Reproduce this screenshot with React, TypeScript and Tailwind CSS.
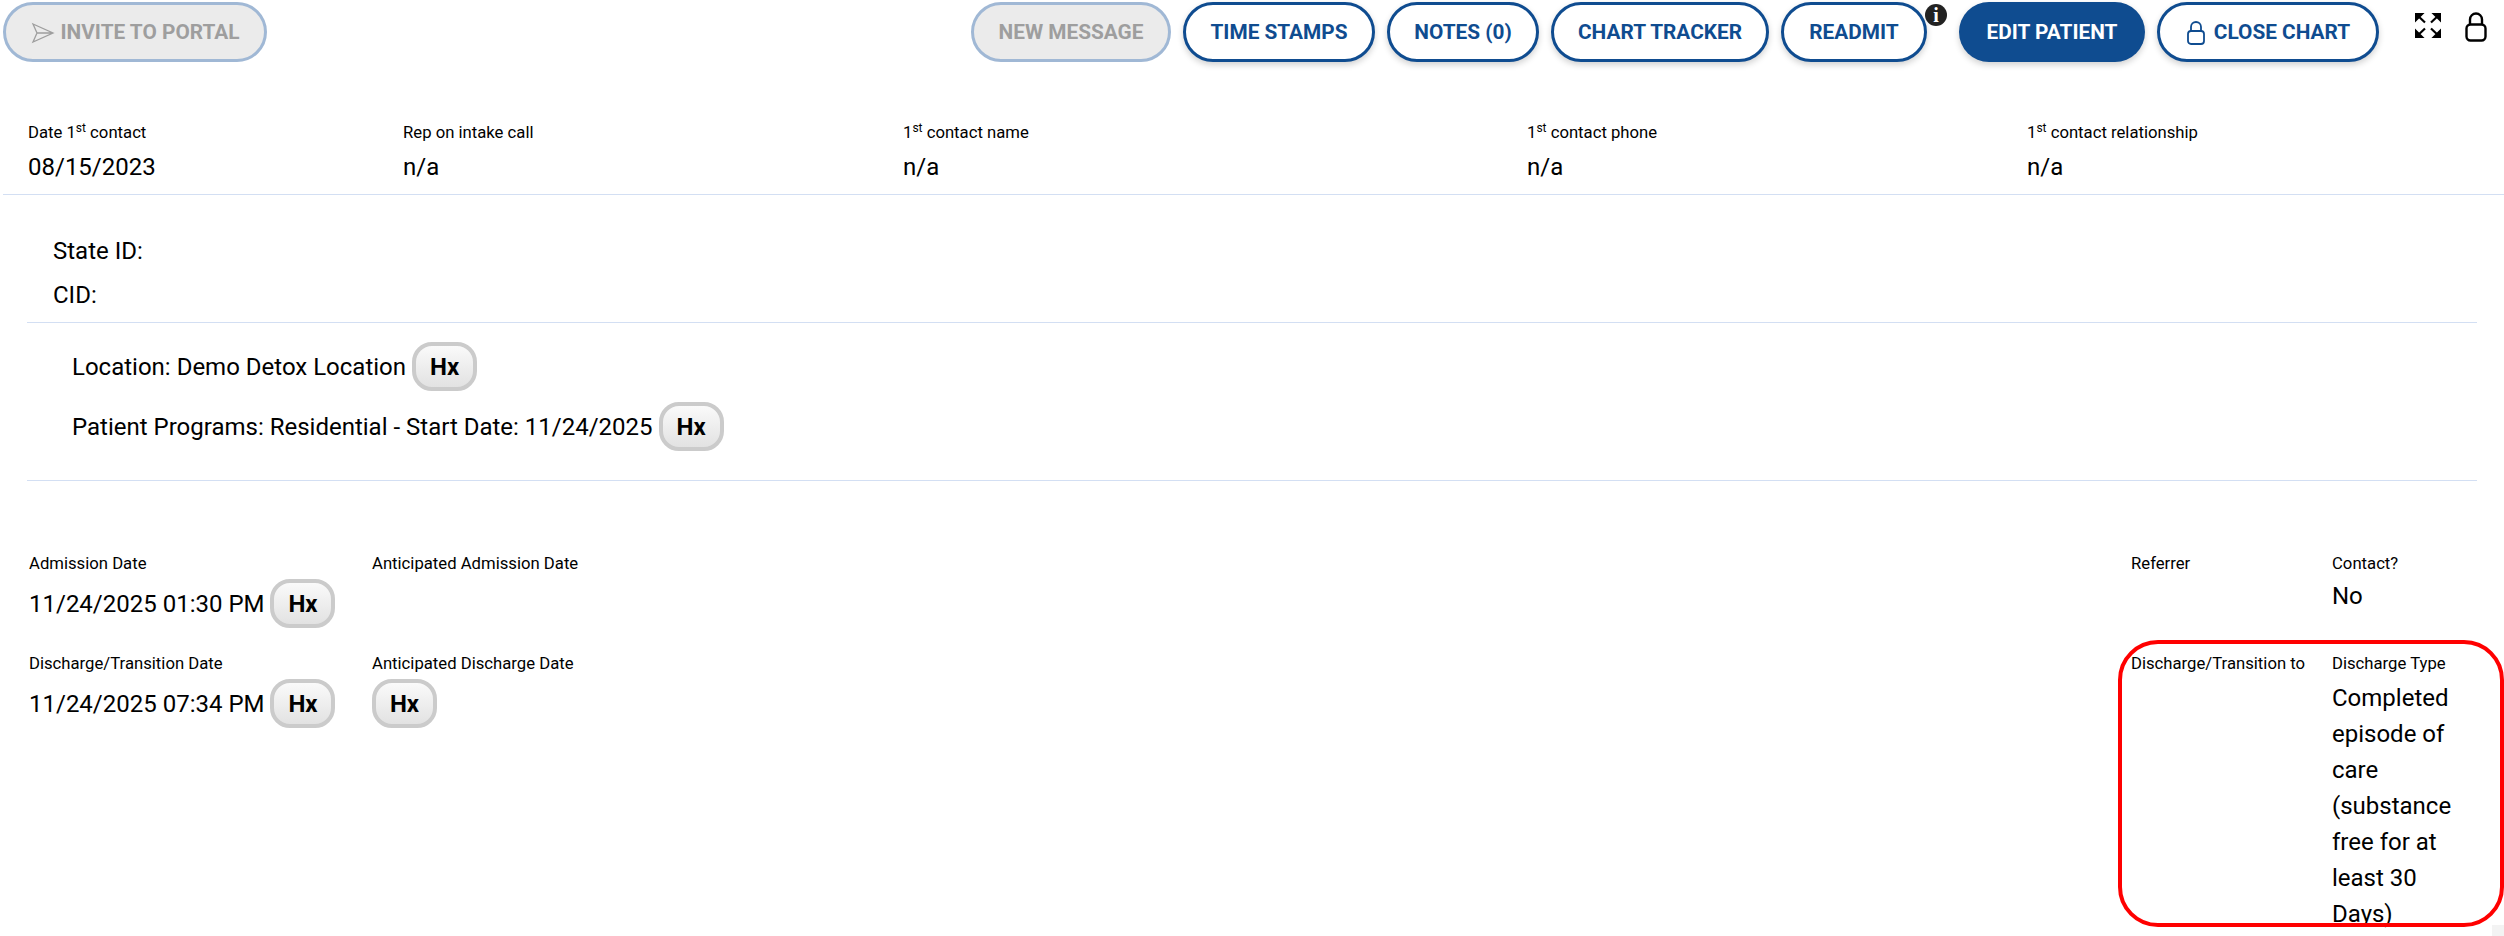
import React from 'react';

const outlineBtn =
  'h-[60px] pt-[1px] rounded-[30px] border-[3px] border-[#0f4c90] bg-white text-[#0f4c90] text-[20.8px] font-bold flex items-center justify-center shadow-[0_3px_6px_rgba(0,0,0,0.18)]';
const disabledBtn =
  'h-[60px] pt-[1px] rounded-[30px] border-[3px] border-[#a0b8d5] bg-[#ebebeb] text-[#9e9e9e] text-[20.8px] font-bold flex items-center justify-center';

function Hx() {
  return (
    <span className="inline-flex items-center justify-center w-[65px] h-[49px] rounded-[20px] border-[4px] border-[#cbcbcb] bg-gradient-to-b from-[#fafafa] to-[#e2e2e2] text-[24px] font-bold text-black">
      Hx
    </span>
  );
}

function Label({ children }: { children: React.ReactNode }) {
  return <div className="text-[16.7px] leading-[20px] text-black">{children}</div>;
}

function St() {
  return <sup className="text-[12px]">st</sup>;
}

function ContactCell({ width, label, value }: { width: string; label: React.ReactNode; value: string }) {
  return (
    <div className={width}>
      <Label>{label}</Label>
      <div className="text-[24px] leading-[28px] mt-[10px] text-black">{value}</div>
    </div>
  );
}

function SmallLock({ className }: { className: string }) {
  return (
    <svg width="20" height="26" viewBox="0 0 20 26" fill="none" stroke="currentColor" strokeWidth="1.8" className={className}>
      <rect x="2" y="11" width="16" height="13" rx="3" />
      <path d="M5 11V7a5 5 0 0 1 10 0v4" />
    </svg>
  );
}

function ExpandIcon() {
  return (
    <svg width="26" height="25" viewBox="0 0 26 25" fill="currentColor" stroke="currentColor" strokeWidth="2.2">
      <path d="M1 1h6L1 7zM1 1l9 8.5" />
      <path d="M25 1h-6l6 6zM25 1l-9 8.5" />
      <path d="M1 24h6l-6-6zM1 24l9-8.5" />
      <path d="M25 24h-6l6-6zM25 24l-9-8.5" />
    </svg>
  );
}

export default function App() {
  return (
    <div className="relative w-[2504px] h-[936px] overflow-hidden bg-white font-['Roboto',sans-serif]">
      {/* top actions */}
      <div className="flex items-start pt-[2px] pl-[3px] pr-[17px] h-[62px]">
        <button className={`${disabledBtn} w-[264px] gap-[6px]`}>
          <svg width="24" height="22" viewBox="0 0 24 22" fill="none" stroke="#9e9e9e" strokeWidth="1.3">
            <path d="M2 2l20 9-20 9 4-9zM6 11h16" />
          </svg>
          INVITE TO PORTAL
        </button>
        <div className="flex-1" />
        <div className="flex items-start gap-[12px]">
          <button className={`${disabledBtn} w-[200px]`}>NEW MESSAGE</button>
          <button className={`${outlineBtn} w-[192px]`}>TIME STAMPS</button>
          <button className={`${outlineBtn} w-[152px]`}>NOTES (0)</button>
          <button className={`${outlineBtn} w-[218px]`}>CHART TRACKER</button>
          <div className="relative w-[146px]">
            <button className={`${outlineBtn} w-full`}>READMIT</button>
            <div className="absolute -right-[20px] top-[2px] w-[22px] h-[22px] rounded-full bg-[#222] text-white text-[20px] font-bold flex items-center justify-center font-['Liberation_Serif',serif]">
              i
            </div>
          </div>
          <button className="h-[60px] pt-[1px] w-[186px] ml-[20px] rounded-[30px] bg-[#0f4c90] text-white text-[20.8px] font-bold shadow-[0_3px_6px_rgba(0,0,0,0.18)]">
            EDIT PATIENT
          </button>
          <button className={`${outlineBtn} w-[222px] gap-[8px]`}>
            <SmallLock className="text-[#0f4c90]" />
            CLOSE CHART
          </button>
          <div className="flex items-start gap-[24px] ml-[24px] pt-[10px] text-black">
            <div className="pt-[1px]">
              <ExpandIcon />
            </div>
            <svg width="22" height="30" viewBox="0 0 22 30" fill="none" stroke="currentColor" strokeWidth="2.4">
              <rect x="1.5" y="12.5" width="19" height="16" rx="4" />
              <path d="M5 12.5V7.5a6 6 0 0 1 12 0v5" />
            </svg>
          </div>
        </div>
      </div>

      {/* first contact */}
      <div className="flex pl-[25px] pt-[61px] h-[133px] border-b border-[#d3dff3] ml-[3px]">
        <ContactCell width="w-[375px]" label={<>Date 1<St /> contact</>} value="08/15/2023" />
        <ContactCell width="w-[500px]" label="Rep on intake call" value="n/a" />
        <ContactCell width="w-[624px]" label={<>1<St /> contact name</>} value="n/a" />
        <ContactCell width="w-[500px]" label={<>1<St /> contact phone</>} value="n/a" />
        <ContactCell width="w-[400px]" label={<>1<St /> contact relationship</>} value="n/a" />
      </div>

      {/* ids */}
      <div className="mx-[27px] h-[128px] border-b border-[#d3dff3] pl-[26px] pt-[34px] text-[24px] leading-[44px] text-black">
        <div>State ID:</div>
        <div>CID:</div>
      </div>

      {/* location / programs */}
      <div className="mx-[27px] h-[158px] border-b border-[#d3dff3] pl-[45px] pt-[19px] text-[24px] text-black">
        <div className="flex items-center gap-[6px] h-[49px]">
          Location: Demo Detox Location <Hx />
        </div>
        <div className="flex items-center gap-[6px] h-[49px] mt-[11px]">
          Patient Programs: Residential - Start Date: 11/24/2025 <Hx />
        </div>
      </div>

      {/* dates */}
      <div className="grid grid-cols-[343px_1fr_201px_172px] pl-[29px] pt-[73px] text-black">
        <div className="h-[100px]">
          <Label>Admission Date</Label>
          <div className="flex items-center gap-[6px] mt-[5px] text-[24px]">
            11/24/2025 01:30 PM <Hx />
          </div>
        </div>
        <Label>Anticipated Admission Date</Label>
        <Label>Referrer</Label>
        <div>
          <Label>Contact?</Label>
          <div className="text-[24px] mt-[4px]">No</div>
        </div>
        <div>
          <Label>Discharge/Transition Date</Label>
          <div className="flex items-center gap-[6px] mt-[5px] text-[24px]">
            11/24/2025 07:34 PM <Hx />
          </div>
        </div>
        <div>
          <Label>Anticipated Discharge Date</Label>
          <div className="mt-[5px]">
            <Hx />
          </div>
        </div>
        <Label>Discharge/Transition to</Label>
        <div>
          <Label>Discharge Type</Label>
          <div className="text-[24px] leading-[36px] mt-[6px] w-[130px]">
            Completed episode of care (substance free for at least 30 Days)
          </div>
        </div>
      </div>

      {/* scrollbar corner */}
      <div className="absolute right-0 bottom-0 w-[12px] h-[11px] bg-[#f3f3f3]" />

      {/* annotation */}
      <div className="absolute left-[2118px] top-[640px] w-[386px] h-[287px] rounded-[40px] border-[4px] border-[#ff0000] pointer-events-none" />
    </div>
  );
}
